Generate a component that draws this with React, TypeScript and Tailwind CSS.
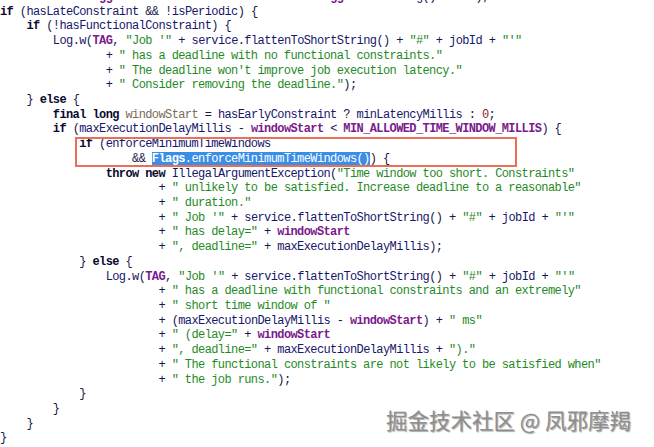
import React from "react";

type Tok = [string, string];

const KW = new Set(["if", "else", "final", "long", "throw", "new"]);
const PURPLE = new Set(["TAG", "windowStart", "MIN_ALLOWED_TIME_WINDOW_MILLIS", "mTriggers"]);

function tokenize(line: string): Tok[] {
  const out: Tok[] = [];
  const re = /("[^"]*"?)|([A-Za-z_][A-Za-z0-9_]*)|(\d+)|(\s+)|([^\sA-Za-z0-9_"]+)/g;
  let m: RegExpExecArray | null;
  while ((m = re.exec(line))) {
    if (m[1]) out.push([m[1], "s"]);
    else if (m[2]) {
      if (KW.has(m[2])) out.push([m[2], "k"]);
      else if (PURPLE.has(m[2])) out.push([m[2], "p"]);
      else out.push([m[2], "v"]);
    } else if (m[3]) out.push([m[3], "n"]);
    else if (m[4]) out.push([m[4], "w"]);
    else out.push([m[5], "o"]);
  }
  return out;
}

const CLS: Record<string, string> = {
  s: "text-[#1f8a1f]",
  k: "font-bold text-[#0a0a30]",
  p: "font-bold text-[#7a1a8c]",
  v: "text-[#16166a]",
  n: "text-[#8b1a1a]",
  w: "",
  o: "text-[#16164a]",
  d: "text-[#7b6a55]",
  hb: "inline-block bg-[#3a8ee6] text-white font-bold",
  h: "inline-block bg-[#3a8ee6] text-white",
};

const raw: (string | Tok[])[] = [
  '         + mTriggers + "                  " + mTriggers.toString() + "#");',
  "if (hasLateConstraint && !isPeriodic) {",
  "    if (!hasFunctionalConstraint) {",
  '        Log.w(TAG, "Job \'" + service.flattenToShortString() + "#" + jobId + "\'"',
  '                + " has a deadline with no functional constraints."',
  '                + " The deadline won\'t improve job execution latency."',
  '                + " Consider removing the deadline.");',
  "    } else {",
  [
    ["        ", "w"],
    ["final", "k"],
    [" ", "w"],
    ["long", "k"],
    [" ", "w"],
    ["windowStart", "d"],
    [" = ", "o"],
    ["hasEarlyConstraint", "v"],
    [" ? ", "o"],
    ["minLatencyMillis", "v"],
    [" : ", "o"],
    ["0", "n"],
    [";", "o"],
  ],
  "        if (maxExecutionDelayMillis - windowStart < MIN_ALLOWED_TIME_WINDOW_MILLIS) {",
  "            if (enforceMinimumTimeWindows",
  [
    ["                    ", "w"],
    ["&& ", "o"],
    ["Flags", "hb"],
    [".enforceMinimumTimeWindows()", "h"],
    [") {", "o"],
  ],
  '                throw new IllegalArgumentException("Time window too short. Constraints"',
  '                        + " unlikely to be satisfied. Increase deadline to a reasonable"',
  '                        + " duration."',
  '                        + " Job \'" + service.flattenToShortString() + "#" + jobId + "\'"',
  '                        + " has delay=" + windowStart',
  '                        + ", deadline=" + maxExecutionDelayMillis);',
  "            } else {",
  '                Log.w(TAG, "Job \'" + service.flattenToShortString() + "#" + jobId + "\'"',
  '                        + " has a deadline with functional constraints and an extremely"',
  '                        + " short time window of "',
  '                        + (maxExecutionDelayMillis - windowStart) + " ms"',
  '                        + " (delay=" + windowStart',
  '                        + ", deadline=" + maxExecutionDelayMillis + ")."',
  '                        + " The functional constraints are not likely to be satisfied when"',
  '                        + " the job runs.");',
  "            }",
  "        }",
  "    }",
  "}",
];

const lines: Tok[][] = raw.map((l) => (typeof l === "string" ? tokenize(l) : l));

export default function App() {
  return (
    <div className="relative w-[654px] h-[447px] overflow-hidden bg-white">
      <div
        className="relative mt-[-10.1px] whitespace-pre text-[12px] leading-[14.72px] tracking-[-0.6px]"
        style={{ fontFamily: '"Liberation Mono", "DejaVu Sans Mono", monospace' }}
      >
        {lines.map((toks, i) => (
          <div key={i} className="h-[14.72px]">
            {toks.map(([t, c], j) => (
              <span key={j} className={CLS[c]}>
                {t}
              </span>
            ))}
          </div>
        ))}
        <div className="absolute left-[75px] top-[147px] w-[442px] h-[30px] border-2 border-[#e8705a]" />
      </div>
      <div
        className="absolute left-[386px] top-[405px] text-[21.5px] leading-[30px] text-[#8e8e8e] whitespace-pre"
        style={{
          fontFamily: '"Noto Sans CJK SC", "Noto Sans", sans-serif',
          textShadow: "1px 1px 1px rgba(0,0,0,0.35), -1px -1px 0 rgba(255,255,255,0.8)",
        }}
      >
        掘金技术社区 @ 凤邪摩羯
      </div>
    </div>
  );
}
